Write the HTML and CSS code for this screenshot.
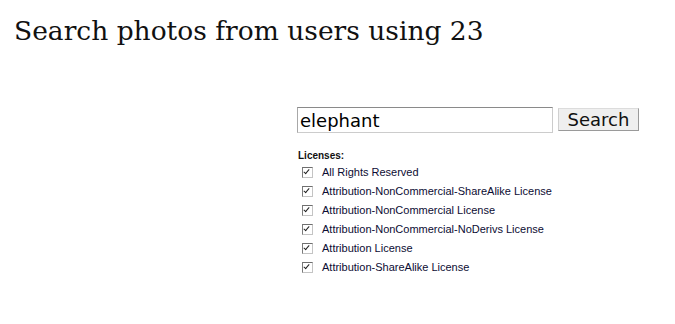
FILE: index.html
```html
<!DOCTYPE html>
<html lang="en">
    <head>
        <meta charset="UTF-8" />
        <title>Search photos from users using 23</title>
        <link rel="stylesheet" href="styles.css">
    </head>
    <body>
        <h1 class="title">Search photos from users using 23</h1>
        <form class="search" autocomplete="off">
            <div class="search-row">
                <input class="query" type="text" name="q" value="elephant" />
                <button class="go" type="submit">Search</button>
            </div>
            <div class="licenses">
                <div class="licenses-label">Licenses:</div>
                <label class="license"><input type="checkbox" checked /><span>All Rights Reserved</span></label>
                <label class="license"><input type="checkbox" checked /><span>Attribution-NonCommercial-ShareAlike License</span></label>
                <label class="license"><input type="checkbox" checked /><span>Attribution-NonCommercial License</span></label>
                <label class="license"><input type="checkbox" checked /><span>Attribution-NonCommercial-NoDerivs License</span></label>
                <label class="license"><input type="checkbox" checked /><span>Attribution License</span></label>
                <label class="license"><input type="checkbox" checked /><span>Attribution-ShareAlike License</span></label>
            </div>
        </form>
    </body>
</html>
```

FILE: styles.css
```css
html,
body {
    margin: 0;
    background: #fff;
    color: #000;
    font-family: "Liberation Sans", Arial, sans-serif;
}
.title {
    margin: 0;
    padding: 13px 0 0 14px;
    font-family: "DejaVu Serif", Georgia, serif;
    font-size: 26.5px;
    font-weight: normal;
    line-height: 36px;
    color: #111;
}
.search {
    margin: 0;
    padding: 0 0 0 297px;
}
.search-row {
    display: flex;
    align-items: flex-start;
    gap: 5px;
    margin-top: 58px;
}
.query {
    box-sizing: border-box;
    width: 256px;
    height: 26px;
    margin: 0;
    padding: 0 2px;
    border: 1px solid #ccc;
    border-top-color: #8a8a8a;
    border-left-color: #a8a8a8;
    font-family: "DejaVu Sans", sans-serif;
    font-size: 18px;
    color: #000;
    outline: none;
}
.go {
    box-sizing: border-box;
    width: 81px;
    height: 23px;
    margin: 1px 0 0 0;
    padding: 0;
    background: #efefef;
    border: 1px solid #9a9a9a;
    border-top-color: #dcdcdc;
    border-left-color: #d0d0d0;
    font-family: "DejaVu Sans", sans-serif;
    font-size: 18px;
    line-height: 20px;
    color: #111;
}
.licenses {
    margin: 16px 0 0 1px;
}
.licenses-label {
    font-size: 10px;
    font-weight: bold;
    line-height: 14px;
    color: #111;
}
.license {
    display: flex;
    align-items: flex-start;
    font-size: 11px;
    line-height: 19px;
    color: #0c0c33;
}
.license input {
    appearance: none;
    -webkit-appearance: none;
    position: relative;
    box-sizing: border-box;
    width: 11px;
    height: 11px;
    margin: 4px 9px 0 4px;
    background: #fff;
    border: 1px solid #c4c4c4;
    border-top-color: #6e6e6e;
    border-left-color: #7a7a7a;
}
.license input:checked::after {
    content: "";
    position: absolute;
    left: 2px;
    top: 0;
    width: 2px;
    height: 5px;
    border: solid #222;
    border-width: 0 1px 1px 0;
    transform: rotate(40deg);
}
```
